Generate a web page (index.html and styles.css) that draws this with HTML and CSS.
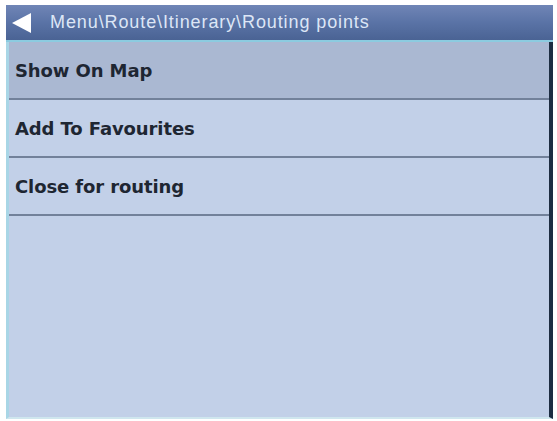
FILE: index.html
```html
<!DOCTYPE html>
<html lang="en">
<head>
<meta charset="UTF-8">
<title>Routing points</title>
<link rel="stylesheet" href="styles.css">
</head>
<body>
<div class="screen">
  <div class="header">
    <svg class="back" width="21" height="22" viewBox="0 0 21 22"><polygon points="20,1 20,21 1,11" fill="#ffffff"/></svg>
    <span class="title">Menu\Route\Itinerary\Routing points</span>
  </div>
  <div class="body">
    <div class="list">
      <div class="item selected">Show On Map</div>
      <div class="item">Add To Favourites</div>
      <div class="item">Close for routing</div>
    </div>
  </div>
</div>
</body>
</html>
```

FILE: styles.css
```css
html, body {
  margin: 0;
  background: #ffffff;
}
body {
  font-family: "DejaVu Sans", sans-serif;
  padding: 5px 4px 2px 6px;
}
.screen {
  height: 414px;
  display: flex;
  flex-direction: column;
  background: #c2d0e8;
}
.header {
  height: 35px;
  display: flex;
  align-items: center;
  gap: 18px;
  padding-left: 5px;
  background: linear-gradient(#7085b6, #5a73a6 50%, #4a6394);
  border-bottom: 2px solid #8ccbe0;
}
.title {
  font-family: "Liberation Sans", sans-serif;
  font-size: 18px;
  color: #dde6f6;
  letter-spacing: 0.9px;
}
.body {
  flex: 1;
  border-left: 3px solid #a9d6e6;
  border-right: 4px solid #1d2d42;
  border-bottom: 2px solid #cfe6ee;
}
.item {
  height: 56px;
  display: flex;
  align-items: center;
  padding-left: 6px;
  font-size: 18px;
  font-weight: bold;
  color: #1e2632;
  border-bottom: 2px solid #72819a;
  letter-spacing: -0.1px;
}
.item.selected {
  background: #aab8d2;
}
```
